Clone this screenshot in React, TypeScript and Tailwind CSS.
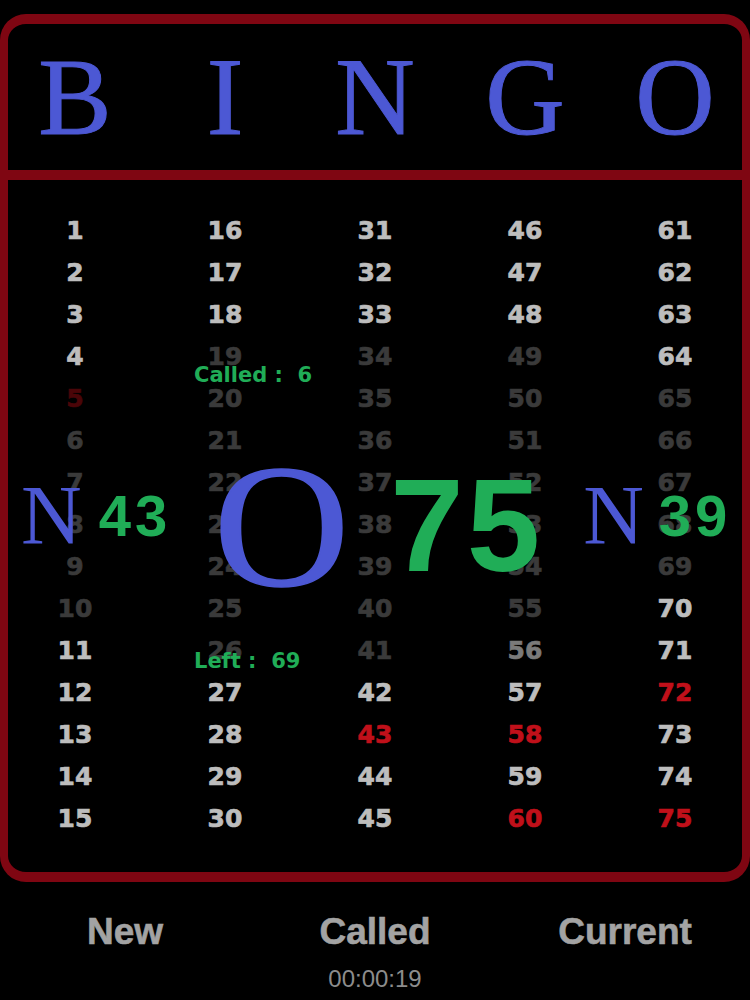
const HEADER = ['B', 'I', 'N', 'G', 'O'];

const BRIGHT = new Set([
  1, 2, 3, 4, 11, 12, 13, 14, 15, 16, 17, 18, 27, 28, 29, 30, 31, 32, 33, 42, 44, 45, 46, 47, 48, 57,
  59, 61, 62, 63, 64, 70, 71, 73, 74,
]);
const CALLED = new Set([43, 58, 60, 72, 75]);

function numberClass(n: number) {
  if (CALLED.has(n)) return 'text-[#c0101a]';
  if (n === 5) return 'text-[#4a0508]';
  if (n === 56) return 'text-[#7a7a7a]';
  if (BRIGHT.has(n)) return 'text-[#bdbdbd]';
  return 'text-[#3a3a3a]';
}

const columns = [0, 1, 2, 3, 4].map((c) => Array.from({ length: 15 }, (_, i) => c * 15 + i + 1));

export default function App() {
  return (
    <div className="h-[1000px] w-[750px] overflow-hidden bg-black">
      <div className="mt-[14px] h-[868px] rounded-[26px] border-[10px] border-x-[8px] border-[#7f0612] bg-black">
        {/* header */}
        <div className="-mx-[8px] flex h-[156px] items-center border-b-[10px] border-[#7f0612]">
          {HEADER.map((l) => (
            <div
              key={l}
              className="flex w-[150px] justify-center text-[110px] leading-none text-[#4c58d4] [font-family:'Liberation_Serif',serif] [-webkit-text-stroke:1px_#4c58d4]"
            >
              {l}
            </div>
          ))}
        </div>

        {/* board */}
        <div className="relative -mx-[8px] flex pt-[30px]">
          {columns.map((col, ci) => (
            <div key={ci} className="flex w-[150px] flex-col items-center">
              {col.map((n) => (
                <div
                  key={n}
                  className={`h-[42px] text-[25px] font-bold leading-[42px] [font-family:'DejaVu_Sans',sans-serif] [-webkit-text-stroke:0.7px_currentColor] ${numberClass(n)}`}
                >
                  {n}
                </div>
              ))}
            </div>
          ))}

          {/* counters */}
          <div className="absolute left-[194px] top-[185px] flex flex-col gap-[265px] whitespace-pre text-[21px] font-bold leading-none text-[#20ad57] [font-family:'DejaVu_Sans',sans-serif]">
            <span>{'Called :  6'}</span>
            <span>{'Left :  69'}</span>
          </div>

          {/* current call strip */}
          <div className="absolute inset-x-0 top-[236px] flex h-[200px] items-center pl-[21px] leading-none">
            <span className="text-[84px] text-[#4c58d4] [font-family:'Liberation_Serif',serif]">N</span>
            <span className="ml-[17px] text-[58px] font-bold tracking-[4px] text-[#20ad57] [font-family:'Liberation_Sans',sans-serif]">
              43
            </span>
            <span className="ml-[47px] mt-[20px] scale-x-[1.07] text-[176px] text-[#4c58d4] [font-family:'Liberation_Serif',serif] [-webkit-text-stroke:1.5px_#4c58d4]">
              O
            </span>
            <span className="ml-[45px] mt-[20px] text-[132px] font-bold tracking-[3px] text-[#20ad57] [font-family:'Liberation_Sans',sans-serif]">
              75
            </span>
            <span className="ml-[40px] text-[84px] text-[#4c58d4] [font-family:'Liberation_Serif',serif]">N</span>
            <span className="ml-[15px] text-[58px] font-bold tracking-[4px] text-[#20ad57] [font-family:'Liberation_Sans',sans-serif]">
              39
            </span>
          </div>
        </div>
      </div>

      {/* controls */}
      <div className="mt-[28px] flex">
        {['New', 'Called', 'Current'].map((t) => (
          <div
            key={t}
            className="flex w-[250px] justify-center text-[37px] font-bold leading-[44px] text-[#a3a3a3] [font-family:'Liberation_Sans',sans-serif] [-webkit-text-stroke:0.6px_#a3a3a3]"
          >
            {t}
          </div>
        ))}
      </div>
      <div className="mt-[10px] text-center text-[24px] leading-[30px] text-[#8c8c8c] [font-family:'Liberation_Sans',sans-serif]">
        00:00:19
      </div>
    </div>
  );
}
